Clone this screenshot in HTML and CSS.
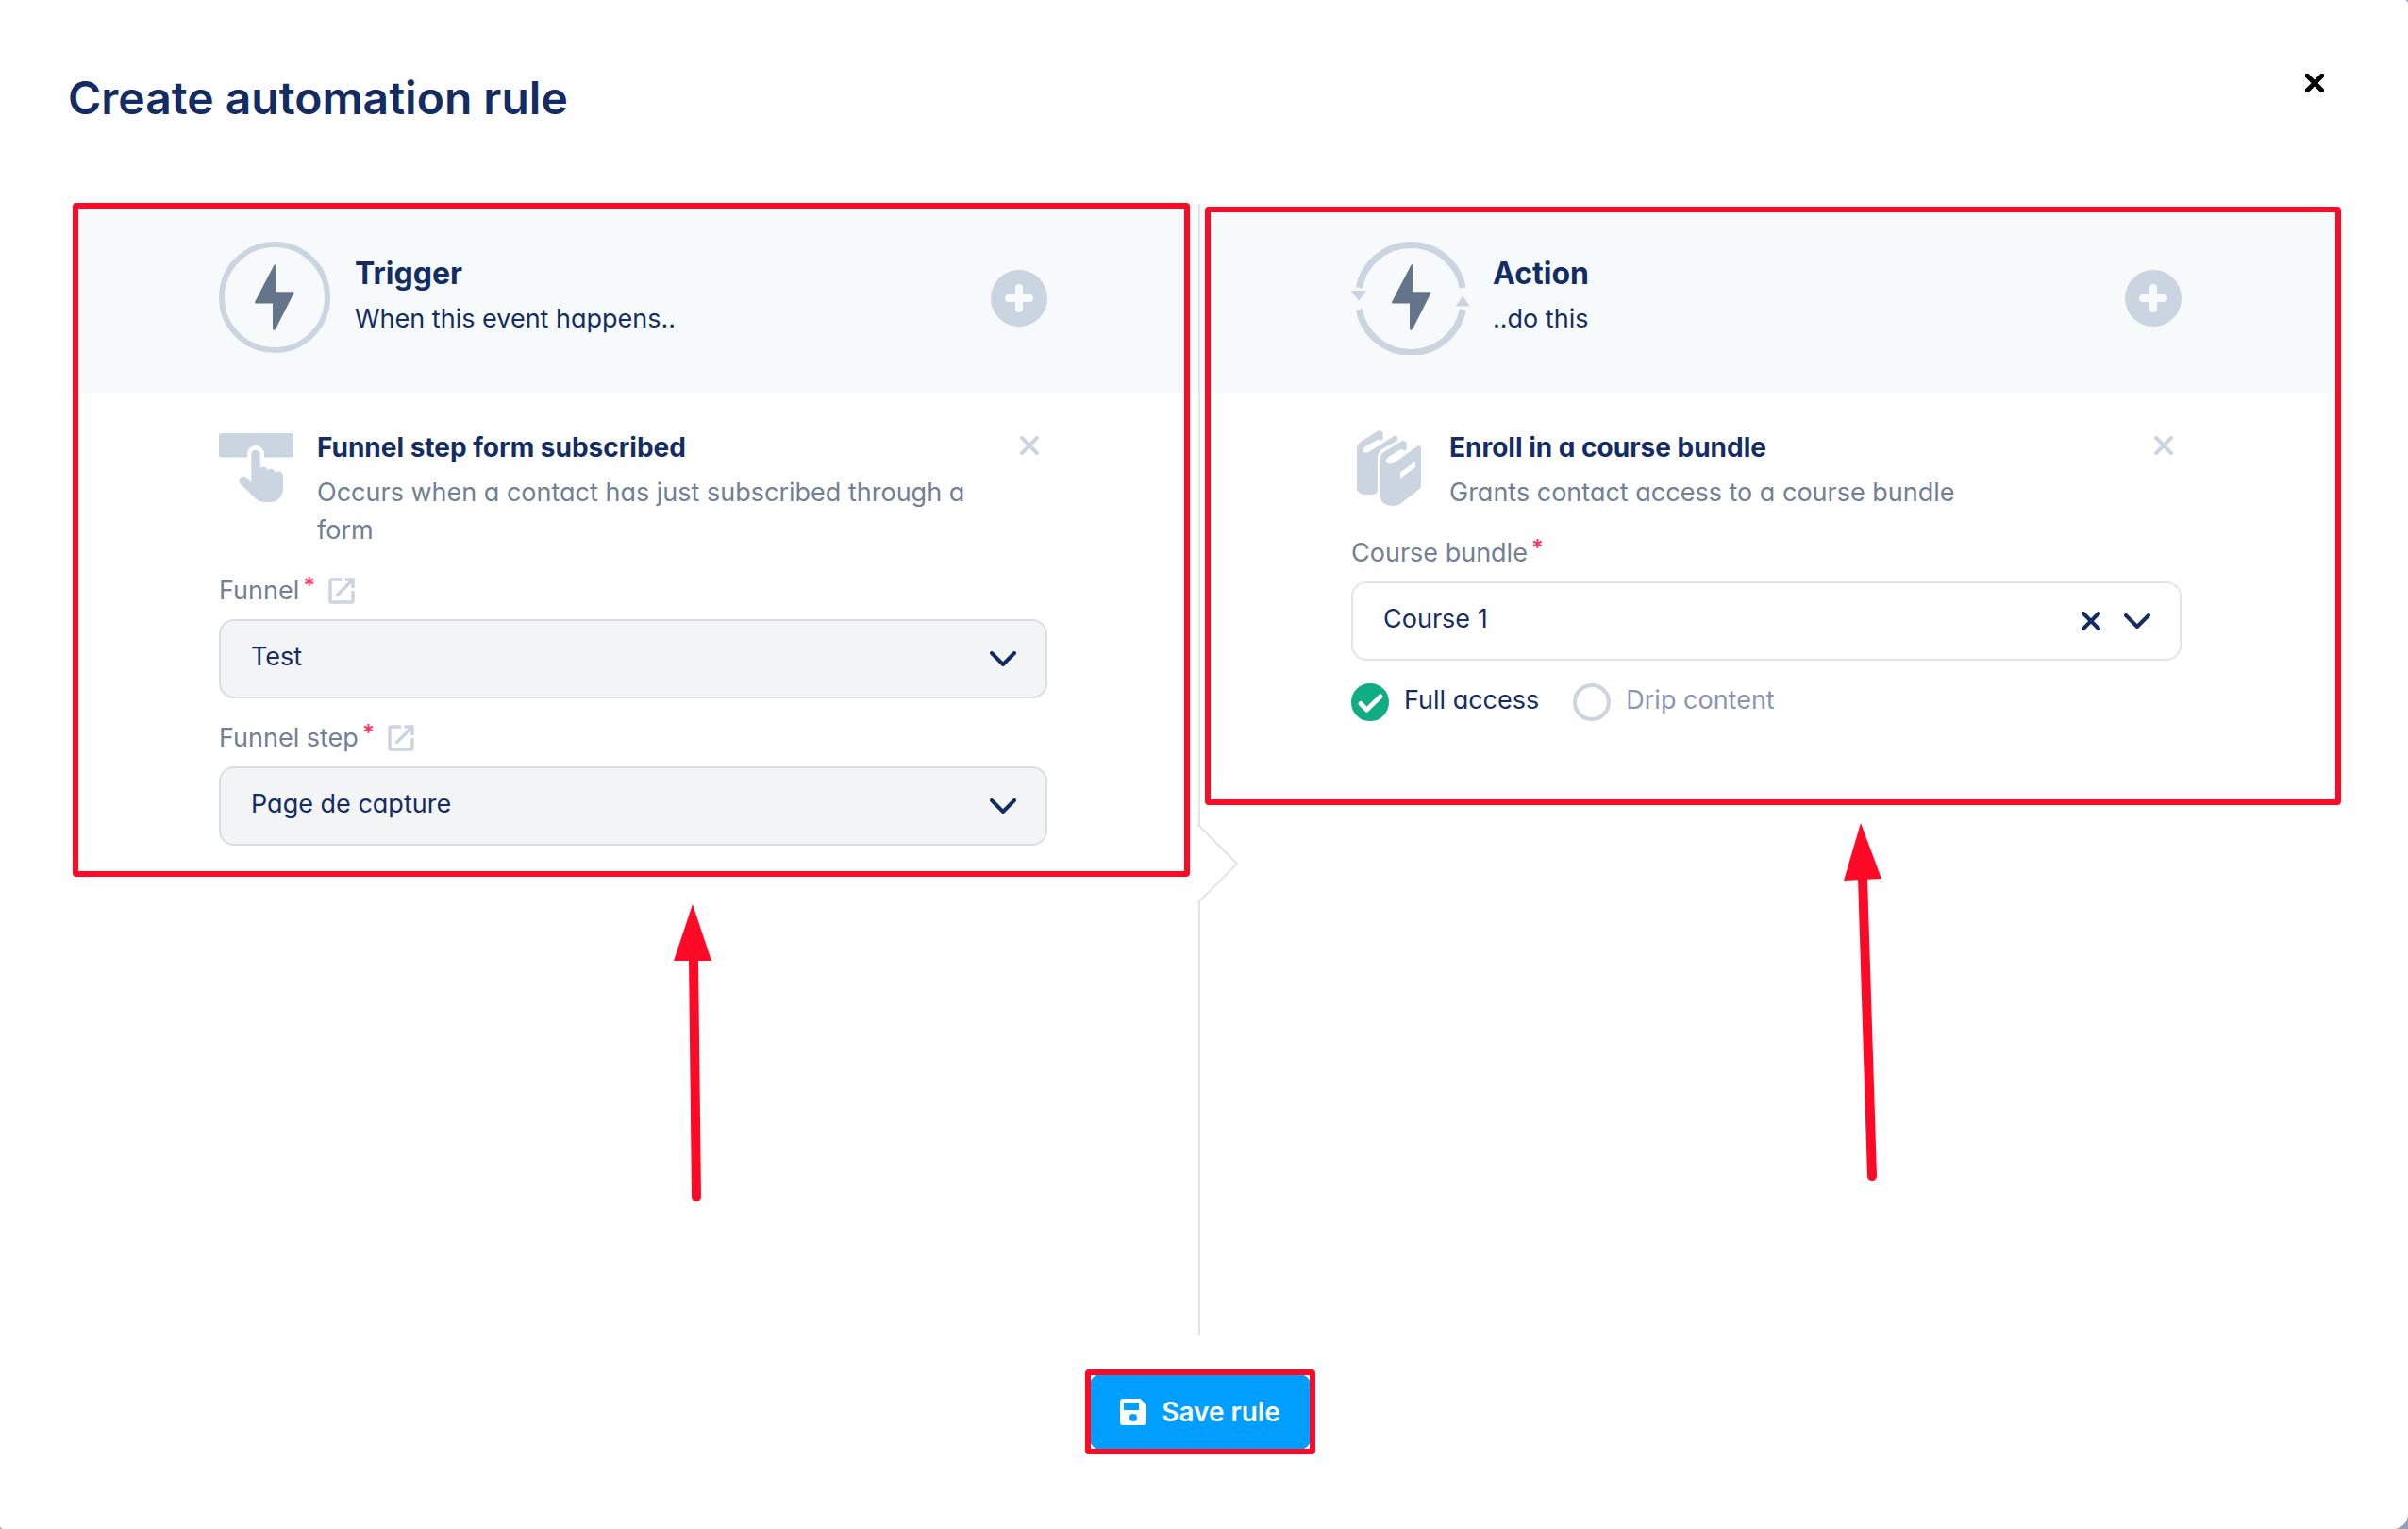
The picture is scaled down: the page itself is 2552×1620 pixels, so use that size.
FILE: index.html
```html
<!DOCTYPE html>
<html lang="en">
<head>
<meta charset="utf-8">
<meta name="viewport" content="width=device-width, initial-scale=1">
<title>Create automation rule</title>
<link rel="stylesheet" href="styles.css">
</head>
<body>
<svg class="sprite" aria-hidden="true">
  <symbol id="cross" viewBox="0 0 20 20"><path d="M2 2l16 16M18 2L2 18" fill="none" stroke="currentColor" stroke-linecap="round"/></symbol>
  <symbol id="plus" viewBox="0 0 60 60"><circle cx="30" cy="30" r="30" fill="#cbd5e1"/><path d="M30 19v22M19 30h22" stroke="#f6fafb" stroke-width="8" stroke-linecap="round"/></symbol>
  <symbol id="chevron" viewBox="0 0 28 16"><path d="M2 2l12 12L26 2" fill="none" stroke="currentColor" stroke-width="4" stroke-linecap="round" stroke-linejoin="round"/></symbol>
  <symbol id="external" viewBox="0 0 28 28"><path d="M14 2H3.500Q2 2 2 3.500V24.500Q2 26 3.500 26H24.500Q26 26 26 24.500V14M17.500 2H26V11M26 2L8.500 19.500" fill="none" stroke="currentColor" stroke-width="3.500"/></symbol>
  <symbol id="bolt" viewBox="0 0 42 70"><path d="M20.500 .8Q22 -.5 22 1.500V29.300H40.500Q42 29.300 41.200 31L22.200 68.500Q21 70.500 19 69V41.500H1.200Q-.5 41.500 .3 39.500Z" fill="#64748b"/></symbol>
</svg>
<main class="modal" role="dialog" aria-labelledby="title">
  <header class="modal-head">
    <h1 id="title">Create automation rule</h1>
    <button class="icon-btn close" type="button" aria-label="Close"><svg width="20" height="20"><use href="#cross"/></svg></button>
  </header>

  <form class="rule">
    <div class="columns">
      <section class="column column-trigger">
        <div class="block">
          <div class="column-head">
            <svg width="120" height="120" viewBox="0 0 120 120"><circle cx="59" cy="59" r="56" fill="none" stroke="#cbd5e1" stroke-width="6"/><use href="#bolt" x="38" y="24" width="42" height="70"/></svg>
            <div class="head-text"><h2>Trigger</h2><p>When this event happens..</p></div>
            <button class="add" type="button" aria-label="Add trigger"><svg width="60" height="60"><use href="#plus"/></svg></button>
          </div>
          <div class="column-body">
            <div class="item">
              <svg width="80" height="80" viewBox="0 0 80 80" fill="#cbd5e1"><path d="M3 3H76Q79 3 79 6V25.500Q79 28.500 76 28.500H48V25A9 9 0 0 0 30 25V28.500H3Q0 28.500 0 25.500V6Q0 3 3 3Z"/><path d="M34.300 55V25.400A4.700 4.700 0 0 1 43.700 25.400V40C45.500 37.500 51 38 51.500 42.500C54 39.500 59 40.500 59.700 45C62.500 42 68 43.500 68 48V62C68 70 62 76 54 76H49C44 76 40 74 37 70.500L22.500 56.500C19.500 52 24 46.500 28.500 49.500Z"/></svg>
              <div class="item-text"><h3>Funnel step form subscribed</h3><p>Occurs when a contact has just subscribed through a form</p></div>
              <button class="icon-btn" type="button" aria-label="Remove trigger"><svg width="20" height="20"><use href="#cross"/></svg></button>
            </div>
            <div class="field">
              <div class="label-row"><label for="funnel">Funnel<span class="req">*</span></label><a href="#funnel" aria-label="Open funnel"><svg width="28" height="28"><use href="#external"/></svg></a></div>
              <div class="select"><select id="funnel" class="filled"><option>Test</option></select><span class="select-icons"><svg width="28" height="16"><use href="#chevron"/></svg></span></div>
            </div>
            <div class="field">
              <div class="label-row"><label for="step">Funnel step<span class="req">*</span></label><a href="#step" aria-label="Open funnel step"><svg width="28" height="28"><use href="#external"/></svg></a></div>
              <div class="select"><select id="step" class="filled"><option>Page de capture</option></select><span class="select-icons"><svg width="28" height="16"><use href="#chevron"/></svg></span></div>
            </div>
          </div>
          <svg class="arrow" width="48" height="320" viewBox="0 0 48 320"><path d="M24 0L44 60H4Z" fill="#ff0a26"/><path d="M25 58L28 310" stroke="#ff0a26" stroke-width="10" stroke-linecap="round"/></svg>
        </div>
        <svg class="notch" width="44" height="84" viewBox="0 0 44 84"><path d="M0 0H1L42 42L1 84H0Z" fill="#fff"/><path d="M1 0V1L42 42L1 83V84" fill="none" stroke="#e1e5e8" stroke-width="2"/></svg>
      </section>

      <section class="column column-action">
        <div class="block">
          <div class="column-head">
            <svg width="126" height="120" viewBox="0 0 126 120"><g fill="none" stroke="#cbd5e1" stroke-width="7"><path d="M8.300 49A56 56 0 0 1 118.300 49"/><path d="M8.300 72A56 56 0 0 0 118.300 72"/></g><path d="M0 52H16L8 63ZM110.500 68.500H126L118.300 57.500Z" fill="#cbd5e1"/><use href="#bolt" x="43" y="24" width="42" height="70"/></svg>
            <div class="head-text"><h2>Action</h2><p>..do this</p></div>
            <button class="add" type="button" aria-label="Add action"><svg width="60" height="60"><use href="#plus"/></svg></button>
          </div>
          <div class="column-body">
            <div class="item">
              <svg width="80" height="80" viewBox="0 0 80 80" fill="#cbd5e1"><path d="M6 20C6 16 8 13.500 11 11.500L27.500 1C30.500 -.8 33.700 .5 33.700 3.500V8C33.700 11 30 11.500 29 9.500L16 16.500C13 18.500 12 20.500 12.500 22.500C14 24.500 17 23.500 20 22L43 7.500C46 4.500 49.300 6 49.300 8.500C49.300 10.500 48 11.500 46 12.500L35 18.500C30 21.500 28 25 28 29V63.500C28 66.500 25 68 21 68H15C10 68 6 65 6 61Z"/><path fill-rule="evenodd" d="M31 31C31 26.500 32.500 24 36 22L52.500 12C55.500 10 58.700 11.500 58.700 14.500V18.500C58.700 22 54.500 22.500 53.500 19.500L41 27C37.500 29.500 36.500 31.500 37 33.500C39 36.500 43.500 35.500 47 33.500L69.500 17C72 15.500 74 16.500 74 19.500V59Q74 60.800 72.500 62L54 76.500C51 79 48 80 44.500 80C37 80 31 76 31 71ZM52 44.500V51L68 39V33Z"/></svg>
              <div class="item-text"><h3>Enroll in a course bundle</h3><p>Grants contact access to a course bundle</p></div>
              <button class="icon-btn" type="button" aria-label="Remove action"><svg width="20" height="20"><use href="#cross"/></svg></button>
            </div>
            <div class="field">
              <div class="label-row"><label for="bundle">Course bundle<span class="req">*</span></label></div>
              <div class="select"><select id="bundle"><option>Course 1</option></select><span class="select-icons"><button class="clear" type="button" aria-label="Clear"><svg width="20" height="20"><use href="#cross"/></svg></button><svg width="28" height="16"><use href="#chevron"/></svg></span></div>
            </div>
            <div class="radios">
              <label class="radio"><span class="dot"><input type="radio" name="access" checked><svg width="40" height="40" viewBox="0 0 40 40"><path d="M10 21.500l6.500 6.500L31 14" fill="none" stroke="#fff" stroke-width="5" stroke-linecap="round" stroke-linejoin="round"/></svg></span><span class="radio-text">Full access</span></label>
              <label class="radio"><span class="dot"><input type="radio" name="access"></span><span class="radio-text">Drip content</span></label>
            </div>
          </div>
          <svg class="arrow" width="48" height="390" viewBox="0 0 48 390"><path d="M22 0L44 59L4 61Z" fill="#ff0a26"/><path d="M24 58L34 374" stroke="#ff0a26" stroke-width="10" stroke-linecap="round"/></svg>
        </div>
      </section>
    </div>

    <footer class="actions">
      <div class="save-wrap">
        <button class="save" type="submit"><svg width="28" height="28" viewBox="0 0 28 28"><path fill="#fff" fill-rule="evenodd" d="M3 0H21.500L28 6.500V25Q28 28 25 28H3Q0 28 0 25V3Q0 0 3 0ZM4 4V12H20V4ZM14 16A4 4 0 1 0 14 24A4 4 0 1 0 14 16Z"/></svg>Save rule</button>
      </div>
    </footer>
  </form>
</main>
</body>
</html>
```
FILE: styles.css
```css
* { box-sizing: border-box; }

body {
  margin: 0;
  background: #959eba;
  color: #132d64;
  font: 400 27px/40px Inter, "Liberation Sans", sans-serif;
  font-feature-settings: "cv11";
}

h1, h2, h3, p { margin: 0; }
svg { display: block; flex: none; }
button, select { font: inherit; font-feature-settings: inherit; color: inherit; }
button { padding: 0; border: 0; background: none; cursor: pointer; }
.sprite { position: absolute; width: 0; height: 0; }

.modal {
  display: flex;
  flex-direction: column;
  min-height: 100vh;
  padding: 72px 80px 84px 72px;
  border-radius: 0 4px 16px 4px;
  background: #fff;
}

.modal-head {
  display: flex;
  justify-content: space-between;
  align-items: flex-start;
  margin-bottom: 80px;
}
.modal-head h1 {
  font-size: 48px;
  line-height: 64px;
  font-weight: 600;
  font-feature-settings: normal;
}

.icon-btn {
  display: grid;
  place-items: center;
  flex: none;
  width: 38px;
  height: 32px;
  color: #cbd5e1;
  stroke-width: 4;
}
.close { color: #000; stroke-width: 5; }

.rule { display: flex; flex-direction: column; flex: 1; }
.columns { display: grid; grid-template-columns: 1fr 1fr; flex: 1; }
.column { position: relative; }
.column-trigger { border-right: 2px solid #e1e5e8; }
.column-trigger .column-head { border-top-left-radius: 16px; }
.column-action .column-head { border-top-right-radius: 16px; }

.block { position: relative; }
.block::after, .save-wrap::after {
  content: "";
  position: absolute;
  border: 6px solid #ff0a26;
  border-radius: 4px;
  pointer-events: none;
}
.column-trigger .block::after { inset: -1px 9px -1px 5px; }
.column-action .block::after { inset: 3px -9px -1px 5px; }

.column-head {
  display: flex;
  align-items: center;
  gap: 24px;
  padding: 40px 160px;
  background: #f6fafb;
}
.head-text { flex: 1; padding-bottom: 4px; line-height: 48px; }
.head-text h2 { font-size: 32px; font-weight: 700; line-height: 48px; }

.column-body { padding: 40px 160px 32px; }
.column-action .column-body { padding-bottom: 88px; }

.item { display: flex; align-items: flex-start; gap: 24px; margin-bottom: 24px; }
.item .icon-btn { margin-left: -24px; }
.item-text { flex: 1; }
.item-text h3 { margin-bottom: 10px; font-size: 28px; line-height: 36px; font-weight: 700; }
.item-text p { color: #718096; }

.field + .field { margin-top: 22px; }
.label-row { display: flex; align-items: center; gap: 14px; margin-bottom: 10px; color: #718096; }
.label-row a { color: #cbd5e1; }
.req {
  margin-left: 4px;
  color: #ff3366;
  font-size: 24px;
  font-weight: 600;
  line-height: 24px;
  vertical-align: text-top;
}

.select { display: grid; align-items: center; }
.select > * { grid-area: 1 / 1; }
.select select {
  width: 100%;
  height: 84px;
  padding: 0 120px 4px 32px;
  border: 2px solid #e1e5e8;
  border-radius: 16px;
  background: #fff;
  appearance: none;
}
.select .filled { border-color: #d9dfe0; background: #f3f4f6; }
.select-icons {
  display: flex;
  justify-self: end;
  align-items: center;
  gap: 25px;
  padding-right: 33px;
  pointer-events: none;
}
.clear { stroke-width: 4; pointer-events: auto; }

.radios { display: flex; gap: 36px; margin-top: 24px; }
.radio { display: flex; align-items: center; gap: 16px; color: #8896b2; }
.radio:first-child { color: #132d64; }
.radio-text { padding-bottom: 4px; line-height: 36px; }
.dot { display: grid; }
.dot > * { grid-area: 1 / 1; }
.dot input {
  width: 40px;
  height: 40px;
  margin: 0;
  border: 4px solid #cbd5e1;
  border-radius: 50%;
  appearance: none;
}
.dot input:checked { border-color: #10ad84; background: #10ad84; }
.dot svg { pointer-events: none; }

.notch { position: absolute; right: -43px; top: calc(50% + 58px); }
.arrow { position: absolute; top: calc(100% + 30px); left: 638px; }
.column-action .arrow { top: calc(100% + 20px); left: 678px; }

.actions { display: flex; justify-content: center; padding-top: 42px; }
.save-wrap { position: relative; }
.save-wrap::after { inset: -5px; }
.save {
  display: flex;
  align-items: center;
  gap: 16px;
  height: 80px;
  padding: 0 32px;
  border-radius: 12px;
  background: #009fff;
  color: #fff;
  font-size: 28px;
  font-weight: 600;
  font-feature-settings: normal;
}
```
